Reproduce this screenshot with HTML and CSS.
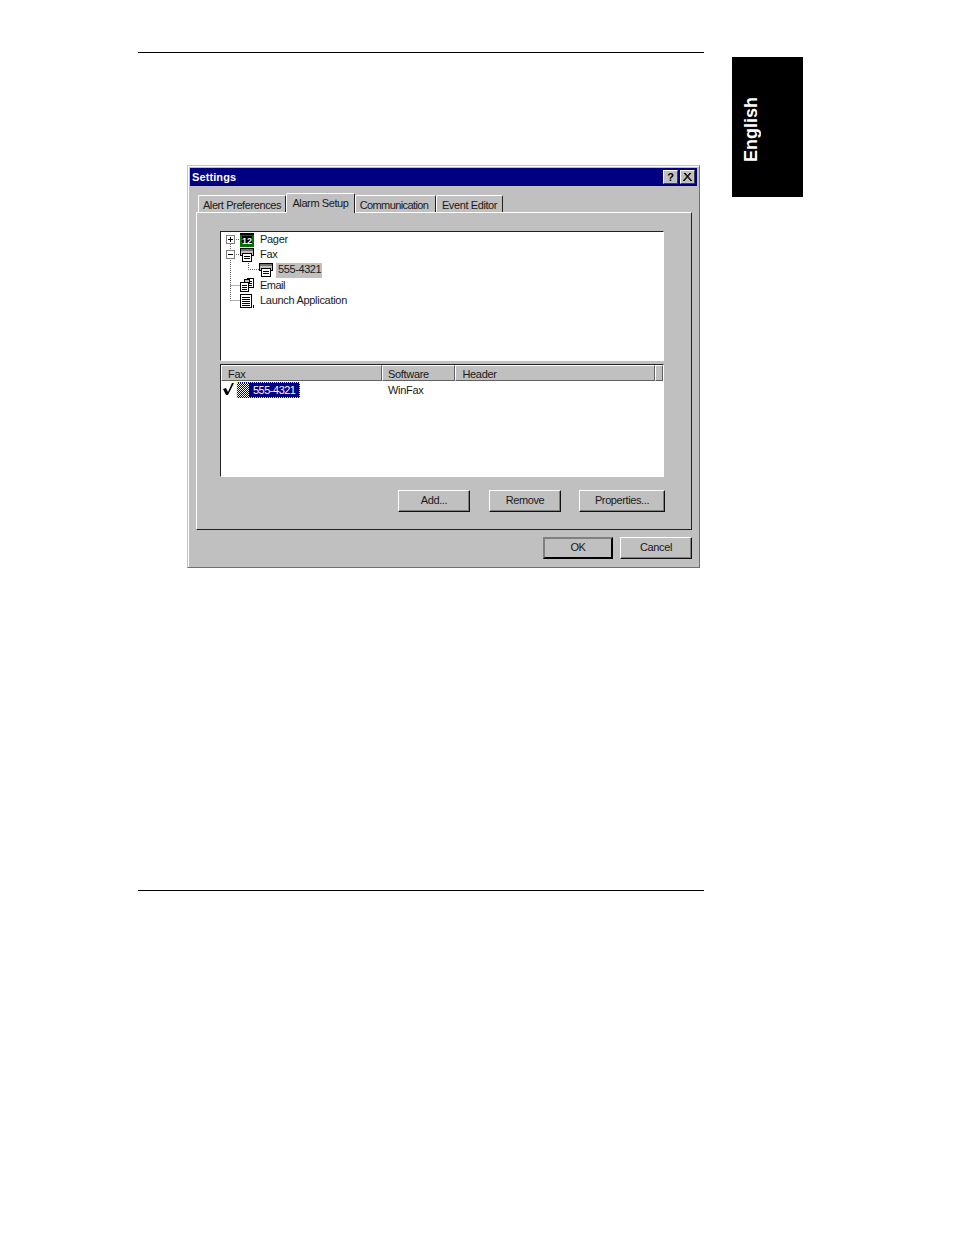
FILE: index.html
```html
<!DOCTYPE html>
<html lang="en">
<head>
    <meta charset="UTF-8">
    <title>Settings</title>
    <link rel="stylesheet" href="styles.css">
</head>
<body>
    <div class="page">
        <main class="main">
            <hr class="rule">
            <div class="dialog">
                <div class="title-bar">
                    <span class="title-text">Settings</span>
                    <span class="title-btn title-help">?</span>
                    <span class="title-btn title-close">
                        <svg width="9" height="8" viewBox="0 0 9 8"><path d="M1 0L8 8M2 0L9 8M8 0L1 8M7 0L0 8" stroke="#000" fill="none"/></svg>
                    </span>
                </div>

                <div class="tabs">
                    <div class="tab tab-first">Alert Preferences</div>
                    <div class="tab tab-active">Alarm Setup</div>
                    <div class="tab tab-comm">Communication</div>
                    <div class="tab tab-event">Event Editor</div>
                </div>

                <div class="panel">
                    <div class="tree sunken">
                        <!-- dotted connector lines -->
                        <svg class="tree-lines" width="60" height="75" viewBox="0 0 60 75">
                            <path d="M9.500 12V68.500M13 7.500H19M13 22.500H19M9.500 53.500H19M9.500 68.500H19M27.500 29V37.500H38" fill="none" stroke="#606060" stroke-dasharray="1 1"/>
                        </svg>
                        <div class="tree-row">
                            <span class="expander">
                                <svg width="9" height="9" viewBox="0 0 9 9"><path d="M2 4.500H7M4.500 2V7" stroke="#000"/></svg>
                            </span>
                            <svg class="icon" width="14" height="14" viewBox="0 0 14 14">
                                <rect width="14" height="14" fill="#007000"/>
                                <rect width="14" height="2" fill="#000"/>
                                <rect x="2" y="3" width="10" height="8" fill="#000"/>
                                <text class="pager-digits" x="7" y="10.500">12</text>
                            </svg>
                            <span class="tree-label">Pager</span>
                        </div>
                        <div class="tree-row">
                            <span class="expander">
                                <svg width="9" height="9" viewBox="0 0 9 9"><path d="M2 4.500H7" stroke="#000"/></svg>
                            </span>
                            <svg class="icon" width="14" height="14" viewBox="0 0 14 14">
                                <rect x=".500" y=".500" width="13" height="7" fill="#c0c0c0" stroke="#000"/>
                                <rect x="1" y="1" width="12" height="2" fill="#707070"/>
                                <rect x="2.500" y="5.500" width="9" height="8" fill="#fff" stroke="#000"/>
                                <path d="M4 8.500H10M4 10.500H10" stroke="#000"/>
                            </svg>
                            <span class="tree-label">Fax</span>
                        </div>
                        <div class="tree-row tree-child">
                            <svg class="icon" width="14" height="14" viewBox="0 0 14 14">
                                <rect x=".500" y=".500" width="13" height="7" fill="#c0c0c0" stroke="#000"/>
                                <rect x="1" y="1" width="12" height="2" fill="#707070"/>
                                <rect x="2.500" y="5.500" width="9" height="8" fill="#fff" stroke="#000"/>
                                <path d="M4 8.500H10M4 10.500H10" stroke="#000"/>
                            </svg>
                            <span class="tree-label tree-selected">555-4321</span>
                        </div>
                        <div class="tree-row">
                            <span class="expander-space"></span>
                            <svg class="icon" width="14" height="14" viewBox="0 0 14 14">
                                <rect x="7.500" y=".500" width="6" height="9" fill="#fff" stroke="#000"/>
                                <path d="M9 3.500H12M9 5.500H12M9 7.500H12" stroke="#000"/>
                                <rect x="4.500" y="1.500" width="5" height="3" fill="#c0c0c0" stroke="#000"/>
                                <rect x=".500" y="4.500" width="8" height="9" fill="#fff" stroke="#000"/>
                                <path d="M2 7.500H7M2 9.500H7M2 11.500H7" stroke="#000"/>
                            </svg>
                            <span class="tree-label tree-email">Email</span>
                        </div>
                        <div class="tree-row">
                            <span class="expander-space"></span>
                            <svg class="icon" width="14" height="14" viewBox="0 0 14 14">
                                <rect x=".500" y=".500" width="11" height="13" fill="#fff" stroke="#000"/>
                                <path d="M2 3.500H10M2 5.500H10M2 7.500H10M2 9.500H10M2 11.500H10" stroke="#000"/>
                                <path d="M13.500 11V14" stroke="#000"/>
                            </svg>
                            <span class="tree-label">Launch Application</span>
                        </div>
                    </div>

                    <div class="list sunken">
                        <div class="list-header">
                            <div class="col col-fax">Fax</div>
                            <div class="col col-software">Software</div>
                            <div class="col col-header">Header</div>
                            <div class="col col-rest"></div>
                        </div>
                        <div class="list-row">
                            <svg class="check" width="11" height="13" viewBox="0 0 11 13">
                                <path d="M0 6L3 5L5 9L9 0L11 0L5 12L3 12Z" fill="#000"/>
                            </svg>
                            <span class="list-selected">
                                <span class="fax-icon"></span>
                                <span class="list-text">555-4321</span>
                            </span>
                            <span class="list-software">WinFax</span>
                        </div>
                    </div>

                    <div class="panel-buttons">
                        <button class="btn btn-add">Add...</button>
                        <button class="btn btn-remove">Remove</button>
                        <button class="btn btn-props">Properties...</button>
                    </div>
                </div>

                <div class="footer">
                    <button class="btn btn-default">OK</button>
                    <button class="btn btn-cancel">Cancel</button>
                </div>
            </div>
            <hr class="rule rule-bottom">
        </main>

        <aside class="side-tab">
            <span class="side-text">English</span>
        </aside>
    </div>
</body>
</html>
```

FILE: styles.css
```css
html, body {
    margin: 0;
    padding: 0;
    background-color: #fff;
}
body {
    font-family: "Liberation Sans", Arial, sans-serif;
    font-size: 11px;
    letter-spacing: -0.3px;
    color: #1a1a1a;
}
.page {
    display: flex;
    align-items: flex-start;
    min-height: 1235px;
    box-sizing: border-box;
    padding: 52px 0 0 138px;
}
.main {
    width: 566px;
}
.rule {
    height: 1px;
    margin: 0;
    border: none;
    background-color: #000;
}
.rule-bottom {
    margin-top: 322px;
}

/* black language tab at the page edge */
.side-tab {
    display: flex;
    align-items: center;
    box-sizing: border-box;
    width: 71px;
    height: 140px;
    margin: 5px 0 0 28px;
    padding: 6px 0 0 7px;
    background-color: #000;
}
.side-text {
    writing-mode: vertical-rl;
    transform: rotate(180deg);
    font-size: 18px;
    font-weight: bold;
    letter-spacing: 0;
    color: #fff;
    line-height: 24px;
}

/* dialog window */
.dialog {
    box-sizing: border-box;
    width: 513px;
    height: 403px;
    margin: 112px 0 0 49px;
    padding: 2px;
    background-color: #c0c0c0;
    border: 1px solid;
    border-color: #c4c4c4 #707070 #707070 #c4c4c4;
    box-shadow: inset 1px 1px 0 #fff;
}
.title-bar {
    display: flex;
    align-items: center;
    height: 18px;
    padding: 0 2px;
    background-color: #000080;
}
.title-text {
    flex: 1;
    color: #fff;
    font-weight: bold;
    font-size: 11px;
    letter-spacing: 0.1px;
}
.title-btn {
    display: flex;
    align-items: center;
    justify-content: center;
    box-sizing: border-box;
    width: 15px;
    height: 14px;
    background-color: #c0c0c0;
    border: 1px solid;
    border-color: #fff #404040 #404040 #fff;
    color: #000;
    font-weight: bold;
    font-size: 11px;
    line-height: 1;
}
.title-close {
    margin-left: 2px;
}

/* tabs */
.tabs {
    display: flex;
    align-items: flex-end;
    height: 26px;
    margin-left: 8px;
    letter-spacing: -0.4px;
}
.tab {
    display: flex;
    align-items: center;
    justify-content: center;
    box-sizing: border-box;
    height: 17px;
    padding-top: 2px;
    border: 1px solid;
    border-color: #fff #202020 #c0c0c0 #fff;
    border-bottom: none;
    border-radius: 2px 2px 0 0;
}
.tab-first {
    width: 88px;
}
.tab-active {
    position: relative;
    width: 69px;
    height: 20px;
    margin: 0 0 -1px 0;
    padding: 0 0 2px;
    background-color: #c0c0c0;
    z-index: 1;
}
.tab-comm {
    width: 81px;
    padding-right: 3px;
    letter-spacing: -0.6px;
}
.tab-event {
    width: 67px;
}

.panel {
    box-sizing: border-box;
    width: 496px;
    height: 318px;
    margin-left: 6px;
    padding: 18px 27px 0 23px;
    border: 1px solid;
    border-color: #fff #202020 #202020 #fff;
}
.sunken {
    box-sizing: border-box;
    background-color: #fff;
    border: 1px solid;
    border-color: #202020 #fff #fff #202020;
}

/* tree */
.tree {
    position: relative;
    height: 130px;
}
.tree-lines {
    position: absolute;
    top: 0;
    left: 0;
    pointer-events: none;
}
.tree-row {
    position: relative;
    display: flex;
    align-items: center;
    height: 15.25px;
    padding-left: 5px;
    z-index: 1;
}
.tree-child {
    padding-left: 38px;
}
.expander {
    display: flex;
    box-sizing: border-box;
    width: 9px;
    height: 9px;
    overflow: hidden;
    background-color: #fff;
    outline: 1px solid #808080;
    outline-offset: -1px;
}
.expander-space {
    width: 9px;
}
.icon {
    margin-left: 5px;
    background-color: #fff;
}
.tree-child .icon {
    margin-left: 0;
}
.pager-digits {
    font-size: 9px;
    font-weight: bold;
    letter-spacing: 0;
    text-anchor: middle;
    fill: #fff;
}
.tree-label {
    margin: 0 0 2px 6px;
}
.tree-email {
    margin-bottom: 0;
    letter-spacing: -0.5px;
}
.tree-selected {
    margin: 0 0 0 3px;
    padding: 0 1px 2px 2px;
    line-height: 13px;
    letter-spacing: -0.4px;
    background-color: #c0c0c0;
}

/* list view */
.list {
    height: 113px;
    margin-top: 3px;
}
.list-header {
    display: flex;
    height: 16px;
}
.col {
    box-sizing: border-box;
    padding-left: 6px;
    line-height: 16px;
    background-color: #c0c0c0;
    border: 1px solid;
    border-color: #fff #606060 #606060 #fff;
}
.col-fax {
    width: 162px;
}
.col-software {
    width: 74px;
    padding-left: 5px;
}
.col-header {
    width: 201px;
}
.col-rest {
    flex: 1;
}
.list-row {
    display: flex;
    align-items: center;
    height: 17px;
    padding-left: 2px;
}
.check {
    flex-shrink: 0;
}
.list-selected {
    display: flex;
    align-items: center;
    box-sizing: border-box;
    width: 64px;
    height: 16px;
    margin: 0 88px 0 2px;
    background-color: #000080;
    outline: 1px dotted #ff0;
    outline-offset: -1px;
}
.fax-icon {
    width: 13px;
    height: 14px;
    margin-right: 4px;
    background-color: #000080;
    background-image: repeating-conic-gradient(#fff 0 25%, #000080 0 50%);
    background-size: 2px 2px;
}
.list-text {
    color: #fff;
    letter-spacing: -0.5px;
}

/* buttons */
.btn {
    box-sizing: border-box;
    height: 22px;
    padding: 0 0 2px;
    font-family: inherit;
    font-size: 11px;
    letter-spacing: -0.4px;
    color: #1a1a1a;
    background-color: #c0c0c0;
    border: 1px solid;
    border-color: #fff #101010 #101010 #fff;
    box-shadow: inset -1px -1px 0 #808080;
}
.panel-buttons {
    display: flex;
    justify-content: flex-end;
    gap: 18px;
    margin: 13px -1px 0 0;
}
.btn-add {
    width: 72px;
    margin-right: 1px;
}
.btn-remove {
    width: 72px;
}
.btn-props {
    width: 86px;
}
.footer {
    display: flex;
    justify-content: flex-end;
    gap: 7px;
    margin: 7px 5px 0 0;
}
.btn-default {
    width: 70px;
    border: 2px solid #000;
    border-color: #808080 #000 #000 #808080;
    box-shadow: none;
}
.btn-cancel {
    width: 72px;
}
```
